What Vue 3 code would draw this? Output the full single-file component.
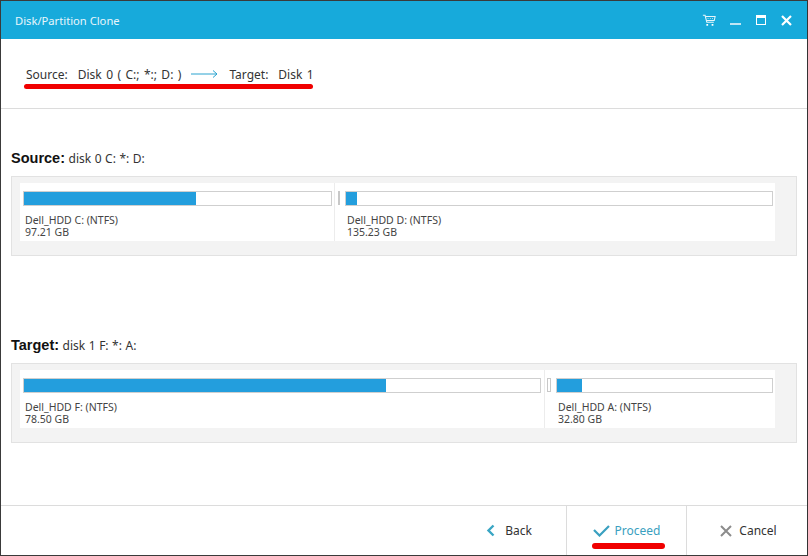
<script setup>
const disks = [
  {
    key: 'source', label: 'Source:', detail: 'disk 0 C: *: D:', cls: 'first',
    parts: [
      { name: 'Dell_HDD C: (NTFS)', size: '97.21 GB', width: 315, barWidth: 309, fill: 172 },
      { name: 'Dell_HDD D: (NTFS)', size: '135.23 GB', width: 433, barWidth: 428, fill: 11 }
    ], sepClass: 'solid'
  },
  {
    key: 'target', label: 'Target:', detail: 'disk 1 F: *: A:', cls: 'second',
    parts: [
      { name: 'Dell_HDD F: (NTFS)', size: '78.50 GB', width: 525, barWidth: 518, fill: 362 },
      { name: 'Dell_HDD A: (NTFS)', size: '32.80 GB', width: 222, barWidth: 217, fill: 25 }
    ], sepClass: 'hollow'
  }
]
</script>

<template>
  <div class="window">
    <header class="titlebar">
      <span class="title">Disk/Partition Clone</span>
      <div class="controls">
        <svg width="14" height="13" viewBox="0 0 16 14" fill="none" stroke="#e6f6fb" stroke-width="1.2">
          <path d="M1 1h2.5l2 8h8" />
          <path d="M4 2.5h11l-1 4.5H5.2" />
          <path d="M6.5 4.7h.8M9 4.7h.8M11.5 4.7h.8" />
          <rect x="5" y="11" width="2" height="2" fill="#fff" stroke="none" />
          <rect x="11" y="11" width="2" height="2" fill="#fff" stroke="none" />
        </svg>
        <svg class="ctl-min" width="11" height="12" viewBox="0 0 11 12"><rect x="0" y="9" width="11" height="2" fill="#bfe5f4" /></svg>
        <svg class="ctl-max" width="10" height="10" viewBox="0 0 10 10" fill="none"><rect x=".5" y=".5" width="9" height="9" stroke="#fff" /><rect x="0" y="0" width="10" height="3" fill="#fff" /></svg>
        <svg class="ctl-close" width="11" height="11" viewBox="0 0 11 11"><path d="M1 1l9 9M10 1l-9 9" stroke="#fff" stroke-width="2.2" /></svg>
      </div>
    </header>

    <section class="summary">
      <div class="summary-line">
        <span>Source:</span><span class="val">Disk 0 ( C:; *:; D: )</span>
        <svg class="arrow" width="27" height="8" viewBox="0 0 27 8" fill="none" stroke="#2aa3cf"><path d="M0 4h26M22 .5l4 3.5-4 3.5" /></svg>
        <span>Target:</span><span class="val">Disk 1</span>
        <i class="mark mark-top"></i>
      </div>
    </section>

    <main class="content">
      <section v-for="d in disks" :key="d.key" class="disk" :class="d.cls">
        <h2 class="disk-head"><b>{{ d.label }}</b> <span>{{ d.detail }}</span></h2>
        <div class="panel">
          <div class="strip">
            <template v-for="(p, i) in d.parts" :key="p.name">
              <div v-if="i" class="sep" :class="d.sepClass"><i></i></div>
              <div class="part" :class="{ divided: i === 0 }" :style="{ width: p.width + 'px' }">
                <div class="bar" :style="{ width: p.barWidth + 'px' }">
                  <div class="fill" :style="{ width: p.fill + 'px' }"></div>
                </div>
                <div class="pname">{{ p.name }}</div>
                <div class="psize">{{ p.size }}</div>
              </div>
            </template>
          </div>
        </div>
      </section>
    </main>

    <footer class="footer">
      <button class="btn back">
        <svg width="9" height="13" viewBox="0 0 9 13" fill="none"><path d="M7.5 1.5L2.5 6.5l5 5" stroke="#3aa6c4" stroke-width="2.4" /></svg>
        <span>Back</span>
      </button>
      <button class="btn proceed">
        <svg width="17" height="12" viewBox="0 0 17 12" fill="none"><path d="M1 5l5.5 5.5L16 1" stroke="#3aa0c0" stroke-width="2.2" /></svg>
        <span>Proceed</span>
        <i class="mark mark-btn"></i>
      </button>
      <button class="btn cancel">
        <svg width="12" height="12" viewBox="0 0 12 12" fill="none"><path d="M1 1l10 10M11 1L1 11" stroke="#8c8c8c" stroke-width="2" /></svg>
        <span>Cancel</span>
      </button>
    </footer>
  </div>
</template>

<style>
html, body { margin: 0; background: #fff; }
</style>

<style scoped>
.window {
  width: 808px;
  height: 556px;
  box-sizing: border-box;
  border: 1px solid #3a3a3a;
  border-right-color: #333;
  display: flex;
  flex-direction: column;
  font-family: "Noto Sans", "Open Sans", "Liberation Sans", sans-serif;
  font-size: 12px;
  color: #333;
  background: #fff;
  overflow: hidden;
}
.titlebar {
  height: 38px;
  flex: none;
  background: #17aadb;
  display: flex;
  align-items: center;
  justify-content: space-between;
  padding: 0 15px 0 14px;
  color: #fff;
}
.title { font-size: 11.2px; color: #e8f6fb; }
.controls { display: flex; align-items: center; }
.ctl-min { margin-left: 14px; }
.ctl-max { margin-left: 15px; }
.ctl-close { margin-left: 15px; }
.summary {
  height: 70px;
  flex: none;
  box-sizing: border-box;
  border-bottom: 1px solid #dcdcdc;
  padding: 27px 0 0 25px;
}
.summary-line {
  position: relative;
  display: flex;
  align-items: center;
  width: 288px;
  height: 16px;
  white-space: nowrap;
}
.val { margin-left: 10px; word-spacing: 1.3px; }
.arrow { margin: 0 11px 0 10px; flex: none; }
.mark {
  position: absolute;
  display: block;
  height: 5px;
  background: #f00000;
  border-radius: 3px;
}
.mark-top { left: -2px; right: 1px; top: 18px; }
.content { flex: 1; }
.disk { padding-left: 10px; }
.disk.first { padding-top: 40px; }
.disk.second { padding-top: 80px; }
.disk-head {
  margin: 0 0 8px;
  font-size: 12px;
  font-weight: 400;
  line-height: 18px;
  word-spacing: .4px;
  color: #333;
}
.disk-head b {
  font-family: "Liberation Sans", Arial, sans-serif;
  font-size: 14.5px;
  font-weight: 700;
  color: #111;
}
.panel {
  width: 786px;
  height: 80px;
  box-sizing: border-box;
  background: #f3f3f3;
  border: 1px solid #e2e2e2;
  padding: 6px 0 0 8px;
}
.strip {
  display: flex;
  height: 58px;
  width: 755px;
  background: #fff;
}
.part {
  flex: none;
  box-sizing: border-box;
  padding: 8px 0 0 3px;
}
.part.divided { border-right: 1px solid #ececec; }
.sep {
  flex: none;
  width: 7px;
  display: flex;
  justify-content: center;
  padding-top: 8px;
}
.sep i { display: block; height: 14px; box-sizing: border-box; }
.sep.solid i { width: 2px; background: #c8c8c8; }
.sep.hollow { width: 8px; }
.sep.hollow i { width: 4px; border: 1px solid #c8c8c8; background: #fff; }
.bar {
  height: 15px;
  box-sizing: border-box;
  border: 1px solid #cfcfcf;
  background: #fff;
  overflow: hidden;
}
.fill { height: 100%; background: #239edd; margin: 0; }
.pname { margin: 8px 0 0 2px; line-height: 12px; font-size: 10.5px; color: #444; white-space: nowrap; }
.psize { margin-left: 2px; line-height: 12px; font-size: 10.5px; color: #444; white-space: nowrap; }
.footer {
  height: 50px;
  flex: none;
  box-sizing: border-box;
  border-top: 1px solid #dcdcdc;
  display: flex;
  justify-content: flex-end;
}
.btn {
  position: relative;
  box-sizing: border-box;
  border: 0;
  background: #fff;
  padding: 0;
  display: flex;
  align-items: center;
  justify-content: center;
  gap: 8px;
  font: inherit;
  font-size: 12px;
  color: #333;
  height: 100%;
}
.back { width: 100px; gap: 10px; padding-right: 14px; }
.proceed { width: 120px; border-left: 1px solid #dcdcdc; gap: 5px; color: #3aa0c0; }
.cancel { width: 121px; border-left: 1px solid #dcdcdc; gap: 7px; padding-left: 3px; }
.mark-btn { left: 25px; width: 73px; height: 6px; bottom: 6px; }
</style>
